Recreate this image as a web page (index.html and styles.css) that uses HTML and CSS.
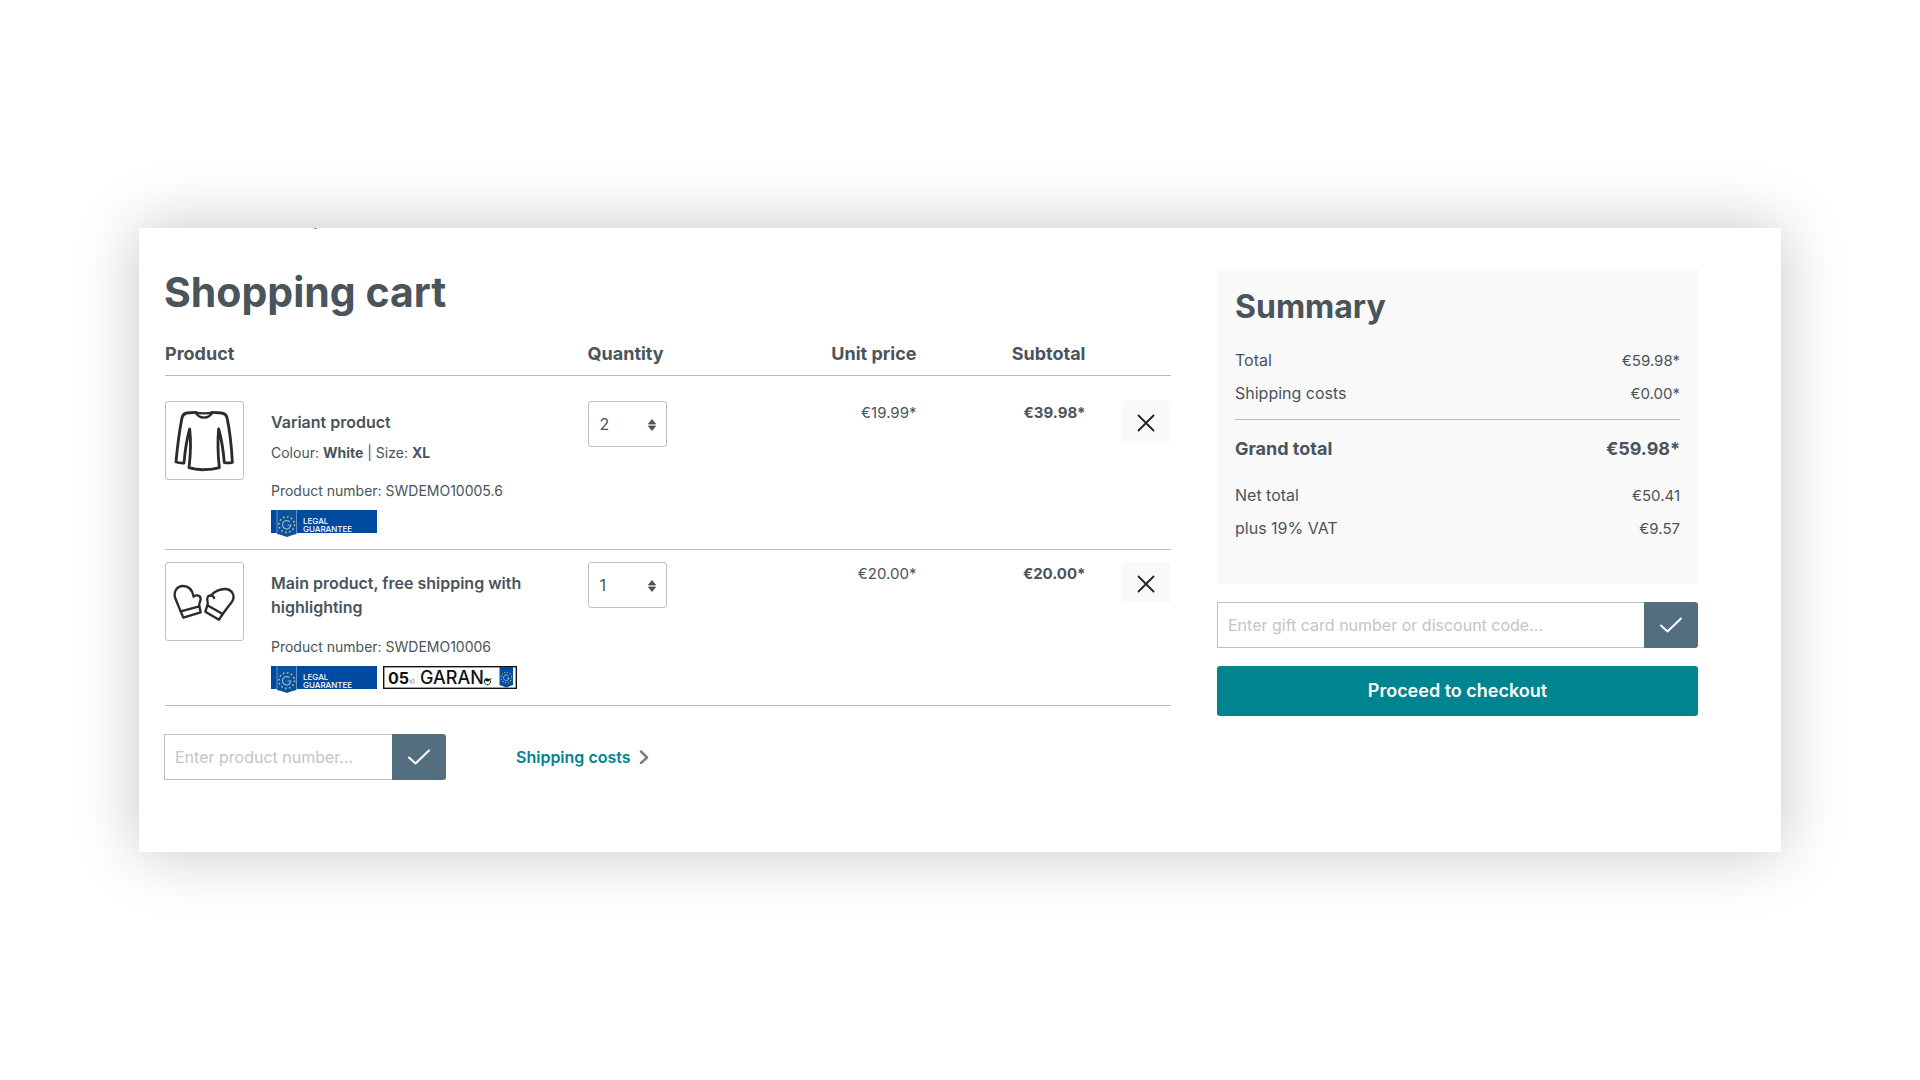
FILE: index.html
```html
<!DOCTYPE html>
<html lang="en">
<head>
  <meta charset="UTF-8">
  <meta name="viewport" content="width=device-width, initial-scale=1.0">
  <title>Shopping cart</title>
  <link rel="stylesheet" href="styles.css">
</head>
<body>
  <!-- Shared icons -->
  <svg class="sprite" aria-hidden="true">
    <symbol id="icon-check" viewBox="0 0 24 18">
      <path d="M2 9.5 L8.5 15.5 L22 2.5" fill="none" stroke="currentColor" stroke-width="2" stroke-linecap="round" stroke-linejoin="round"/>
    </symbol>
    <symbol id="icon-x" viewBox="0 0 18 18">
      <path d="M1.500 1.500 L16.500 16.500 M16.500 1.500 L1.500 16.500" fill="none" stroke="currentColor" stroke-width="1.8" stroke-linecap="round"/>
    </symbol>
    <symbol id="icon-sort" viewBox="0 0 8 12">
      <path d="M4 0.5 L7.6 5 H0.4 Z M4 11.5 L7.6 7 H0.4 Z" fill="currentColor" stroke="currentColor" stroke-width="0.8" stroke-linejoin="round"/>
    </symbol>
    <symbol id="legal-shield" viewBox="0 0 106 27">
      <rect width="106" height="23" fill="#004a9f"/>
      <path d="M6 0 V24 L10 25 L16 27 L21.500 25 L25.500 24 V0 Z" fill="#0b519f"/>
      <path d="M6 0 V23 M25.500 0 V23" stroke="#7fa6d3" stroke-width="0.8"/>
      <circle cx="15.700" cy="14.600" r="7.800" fill="none" stroke="#b5c76a" stroke-width="1.600" stroke-dasharray="1.6 2.484"/>
      <path d="M18.600 11.800 A4.200 4.200 0 1 0 19.800 15 H16.500" fill="none" stroke="#8fb4dd" stroke-width="1.200"/>
    </symbol>
  </svg>

  <main class="panel">
    <section class="cart">
      <h1>Shopping cart</h1>
      <table class="cart-table">
        <colgroup>
          <col class="col-product">
          <col class="col-quantity">
          <col class="col-unit">
          <col class="col-subtotal">
          <col class="col-remove">
        </colgroup>
        <thead>
          <tr>
            <th>Product</th>
            <th>Quantity</th>
            <th class="price">Unit price</th>
            <th class="price">Subtotal</th>
            <th></th>
          </tr>
        </thead>
        <tbody>
          <tr>
            <td>
              <div class="product">
                <div class="thumb">
                  <svg viewBox="49 37 231 231" fill="none" stroke="#2b2b2b" stroke-width="8.500" stroke-linejoin="round" stroke-linecap="round">
                    <path d="M137 68 L111 70 Q100 72 97 84 Q86 140 79 217 Q91 221 103 220 Q108 160 120 118 Q126 170 118 234 Q140 241 164 240 Q190 240 209 234 Q202 170 207 118 Q219 160 224 219 Q236 221 248 218 Q244 140 232 84 Q229 72 216 70 L189 68"/>
                    <path d="M137 68 Q163 74 189 68 Q180 83 163 84 Q146 83 137 68 Z" stroke-width="7"/>
                  </svg>
                </div>
                <div class="details">
                  <div class="name">Variant product</div>
                  <div class="options">Colour: <b>White</b> | Size: <b>XL</b></div>
                  <div class="number">Product number: SWDEMO10005.6</div>
                  <div class="badges">
                    <svg class="legal" viewBox="0 0 106 27" role="img" aria-label="Legal guarantee">
                      <use href="#legal-shield"/>
                      <text x="32" y="14">LEGAL</text>
                      <text x="32" y="22">GUARANTEE</text>
                    </svg>
                  </div>
                </div>
              </div>
            </td>
            <td>
              <div class="quantity">
                <select aria-label="Quantity of Variant product">
                  <option>1</option>
                  <option selected>2</option>
                  <option>3</option>
                </select>
                <svg><use href="#icon-sort"/></svg>
              </div>
            </td>
            <td class="price">€19.99*</td>
            <td class="price subtotal">€39.98*</td>
            <td class="remove"><button type="button" aria-label="Remove Variant product"><svg><use href="#icon-x"/></svg></button></td>
          </tr>
          <tr>
            <td>
              <div class="product">
                <div class="thumb">
                  <svg viewBox="49 37 231 231" fill="none" stroke="#2b2b2b" stroke-width="7" stroke-linejoin="round" stroke-linecap="round">
                    <path d="M93 182 L149 167 L153 185 L101 201 Z"/>
                    <path d="M93 182 Q86 165 79 148 C68 124 82 106 100 106 C118 106 128 118 132 138 C140 132 153 133 153 145 C153 153 146 158 149 167"/>
                    <path d="M173 164 L219 190 L208 207 L167 183 Z"/>
                    <path d="M173 164 C177 158 171 148 173 142 C176 131 190 132 193 142 M184 135 C193 122 212 114 228 115 C248 117 258 136 247 153 Q232 172 219 190"/>
                  </svg>
                </div>
                <div class="details">
                  <div class="name">Main product, free shipping with highlighting</div>
                  <div class="number">Product number: SWDEMO10006</div>
                  <div class="badges">
                    <svg class="legal" viewBox="0 0 106 27" role="img" aria-label="Legal guarantee">
                      <use href="#legal-shield"/>
                      <text x="32" y="14">LEGAL</text>
                      <text x="32" y="22">GUARANTEE</text>
                    </svg>
                    <svg class="garan" viewBox="0 0 134 23" role="img" aria-label="Garan label, 5 years">
                      <rect x="0.700" y="0.700" width="132.600" height="21.600" fill="#fff" stroke="#111" stroke-width="1.400"/>
                      <text x="5" y="18" class="garan-years">05</text>
                      <path d="M27 17 V14.500 H29 V17 Z M29 13 H31 V17 H29" fill="none" stroke="#aaa" stroke-width="0.9"/>
                      <path d="M34.500 5 V19" stroke="#bbb" stroke-width="0.6" stroke-dasharray="1 1"/>
                      <text x="37" y="18" class="garan-name">GARAN</text>
                      <path d="M107.500 14.500 A3.200 3.200 0 1 1 102.500 13" fill="none" stroke="#222" stroke-width="1"/>
                      <path d="M101.500 13.500 Q103 11.500 106 13 L109 12 L105.500 15.500 Q102.500 16 101.500 13.500 Z" fill="#111"/>
                      <path d="M116.500 1 H130 V19 L123.300 21.500 L116.500 19 Z" fill="#004a9f"/>
                      <circle cx="123.300" cy="11.500" r="5.300" fill="none" stroke="#b5c76a" stroke-width="1.200" stroke-dasharray="1 1.775"/>
                      <path d="M125.300 9.700 A2.800 2.800 0 1 0 126.100 12 H124" fill="none" stroke="#9fc0e4" stroke-width="1"/>
                    </svg>
                  </div>
                </div>
              </div>
            </td>
            <td>
              <div class="quantity">
                <select aria-label="Quantity of Main product">
                  <option selected>1</option>
                  <option>2</option>
                  <option>3</option>
                </select>
                <svg><use href="#icon-sort"/></svg>
              </div>
            </td>
            <td class="price">€20.00*</td>
            <td class="price subtotal">€20.00*</td>
            <td class="remove"><button type="button" aria-label="Remove Main product"><svg><use href="#icon-x"/></svg></button></td>
          </tr>
        </tbody>
      </table>

      <div class="cart-actions">
        <form class="input-group add-product">
          <input type="text" placeholder="Enter product number..." aria-label="Product number">
          <button type="submit" aria-label="Add product"><svg><use href="#icon-check"/></svg></button>
        </form>
        <a class="shipping-link" href="#">Shipping costs
          <svg viewBox="0 0 10 14"><path d="M2 1.500 L8 7.500 L2 13" fill="none" stroke="#7d8185" stroke-width="2.500" stroke-linecap="round" stroke-linejoin="round"/></svg>
        </a>
      </div>
    </section>

    <aside class="sidebar">
      <div class="summary">
        <h2>Summary</h2>
        <dl>
          <div><dt>Total</dt><dd>€59.98*</dd></div>
          <div><dt>Shipping costs</dt><dd>€0.00*</dd></div>
          <div class="grand-total"><dt>Grand total</dt><dd>€59.98*</dd></div>
          <div><dt>Net total</dt><dd>€50.41</dd></div>
          <div><dt>plus 19% VAT</dt><dd>€9.57</dd></div>
        </dl>
      </div>
      <form class="input-group">
        <input type="text" placeholder="Enter gift card number or discount code..." aria-label="Gift card number or discount code">
        <button type="submit" aria-label="Redeem code"><svg><use href="#icon-check"/></svg></button>
      </form>
      <button type="button" class="checkout">Proceed to checkout</button>
    </aside>
  </main>
</body>
</html>
```
FILE: styles.css
```css
* {
  box-sizing: border-box;
}

body {
  margin: 0;
  min-height: 100vh;
  padding: 0 139px;
  display: flex;
  align-items: center;
  background: #fff;
  color: #4a545b;
  font-family: Inter, "Liberation Sans", sans-serif;
  font-size: 16px;
  line-height: 24px;
}

h1,
h2,
dl,
dd {
  margin: 0;
}

button,
input,
select {
  font: inherit;
  color: inherit;
}

button {
  border: none;
  padding: 0;
  cursor: pointer;
}

.sprite {
  position: absolute;
  width: 0;
  height: 0;
}

.panel {
  position: relative;
  flex: 1;
  display: grid;
  grid-template-columns: minmax(0, 1007fr) minmax(0, 481fr);
  gap: 46px;
  align-items: start;
  padding: 41px 83px 72px 25px;
  background: #fff;
  box-shadow: 0 0 60px rgba(0, 0, 0, 0.23);
}

.panel::before {
  content: "";
  position: absolute;
  top: 0;
  left: 175px;
  width: 3px;
  height: 1px;
  background: #999;
}

/* Cart */
h1 {
  margin-bottom: 25px;
  font-size: 41px;
  line-height: 46px;
  font-weight: 700;
}

.cart-table {
  width: 100%;
  padding-left: 1px;
  table-layout: fixed;
  border-collapse: separate;
  border-spacing: 0;
}

.col-product {
  width: 42%;
}

.col-quantity {
  width: 14%;
}

.col-unit {
  width: 18.7%;
}

.col-subtotal {
  width: 16.8%;
}

.col-remove {
  width: 8.5%;
}

th {
  padding: 0 0 8px;
  font-size: 18px;
  line-height: 27px;
  font-weight: 700;
  text-align: left;
}

td {
  padding: 12px 0;
  vertical-align: top;
}

th,
td {
  border-bottom: 1px solid #b8bcc0;
}

tbody tr:first-child td {
  padding-top: 25px;
}

.price {
  text-align: right;
}

td.price {
  font-size: 15px;
}

.subtotal {
  font-weight: 700;
}

.product {
  display: flex;
  gap: 27px;
}

.thumb {
  flex: none;
  width: 79px;
  height: 79px;
  border: 1px solid #bcc1c7;
  border-radius: 3px;
}

.thumb svg {
  display: block;
  width: 100%;
  height: 100%;
}

.details {
  width: 260px;
  padding-top: 9px;
}

.name {
  font-weight: 600;
}

.options,
.number {
  font-size: 14px;
  line-height: 21px;
}

.options {
  margin-top: 8px;
}

.number {
  margin: 17px 0 9px;
}

.badges {
  display: flex;
  gap: 6px;
}

.badges svg {
  flex: none;
}

.legal {
  width: 106px;
  height: 27px;
}

.legal text {
  fill: #fff;
  font-size: 8px;
  font-weight: 500;
}

.garan {
  width: 134px;
  height: 23px;
}

.garan-years {
  fill: #111;
  font-size: 16px;
  font-weight: 700;
}

.garan-name {
  fill: #111;
  font-size: 18px;
  font-weight: 500;
}

.quantity {
  position: relative;
  width: 79px;
}

.quantity select {
  display: block;
  width: 100%;
  height: 46px;
  padding: 0 11px;
  appearance: none;
  background: #fff;
  border: 1px solid #bcc1c7;
  border-radius: 3px;
}

.quantity svg {
  position: absolute;
  top: 18px;
  right: 11px;
  width: 8px;
  height: 12px;
  pointer-events: none;
}

.remove {
  text-align: right;
}

.remove button {
  width: 50px;
  height: 40px;
  background: #f9f9f9;
  color: #222;
}

.remove svg {
  display: block;
  width: 18px;
  height: 18px;
  margin: 4px auto 0;
}

.cart-actions {
  display: flex;
  align-items: center;
  gap: 70px;
  margin-top: 28px;
}

.input-group {
  display: flex;
}

.add-product {
  width: 282px;
}

.input-group input {
  flex: 1;
  min-width: 0;
  height: 46px;
  padding: 0 10px;
  background: #fff;
  border: 1px solid #bcc1c7;
  border-right: none;
  border-radius: 0;
}

.input-group input::placeholder {
  color: #c3c5c7;
  opacity: 1;
}

.input-group button {
  width: 54px;
  background: #526e7f;
  color: #fff;
  border-radius: 0 3px 3px 0;
}

.input-group svg {
  display: block;
  width: 24px;
  height: 18px;
  margin: 0 auto;
}

.shipping-link {
  display: flex;
  align-items: center;
  gap: 8px;
  color: #008490;
  font-weight: 600;
  text-decoration: none;
}

.shipping-link svg {
  width: 10px;
  height: 14px;
}

/* Summary */
.sidebar {
  display: flex;
  flex-direction: column;
  gap: 18px;
}

.summary {
  padding: 19px 18px 39px;
  background: #f9f9f9;
}

h2 {
  margin-bottom: 18px;
  font-size: 32px;
  line-height: 38px;
  font-weight: 700;
}

.summary dl div {
  display: flex;
  justify-content: space-between;
  line-height: 33px;
}

.summary dd {
  font-size: 15px;
}

.summary .grand-total {
  margin: 9px 0 14px;
  padding-top: 12px;
  border-top: 1px solid #bcc1c7;
  font-size: 18px;
  font-weight: 700;
}

.summary .grand-total dd {
  font-size: 18px;
}

.checkout {
  height: 50px;
  background: #008490;
  border-radius: 3px;
  color: #fff;
  font-size: 18px;
  font-weight: 600;
}
```
